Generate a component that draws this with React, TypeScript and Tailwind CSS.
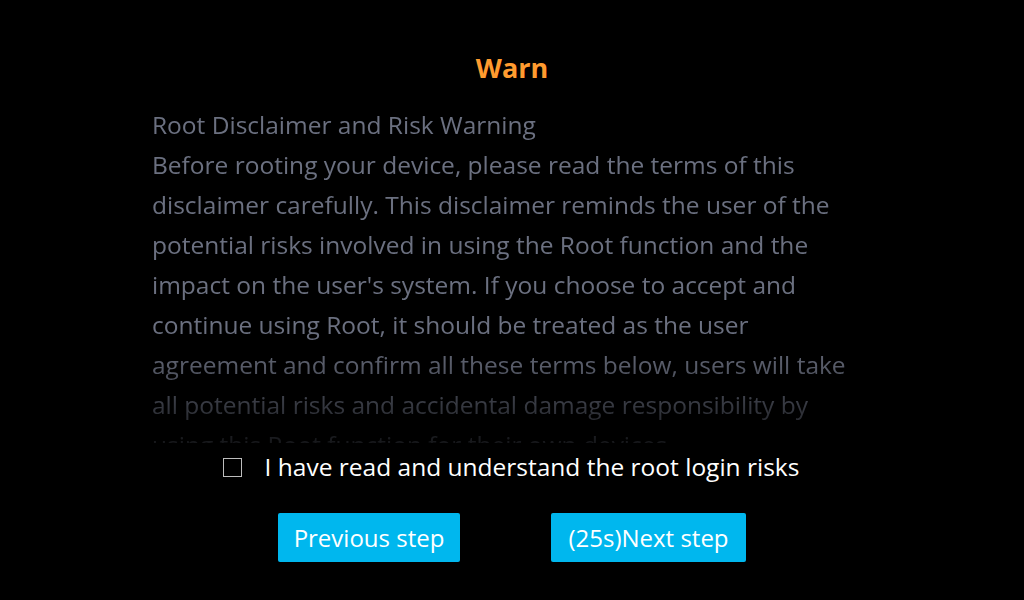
import React from "react";

const lines = [
  "Root Disclaimer and Risk Warning",
  "Before rooting your device, please read the terms of this",
  "disclaimer carefully. This disclaimer reminds the user of the",
  "potential risks involved in using the Root function and the",
  "impact on the user's system. If you choose to accept and",
  "continue using Root, it should be treated as the user",
  "agreement and confirm all these terms below, users will take",
  "all potential risks and accidental damage responsibility by",
  "using this Root function for their own devices.",
];

const mask =
  "linear-gradient(to bottom, #000 0px, #000 225px, rgba(0,0,0,0.8) 262px, rgba(0,0,0,0.5) 300px, rgba(0,0,0,0.2) 338px)";

export default function App() {
  return (
    <div
      className="w-[1024px] h-[600px] bg-black flex flex-col items-center overflow-hidden"
      style={{ fontFamily: '"Open Sans", "Noto Sans", sans-serif' }}
    >
      <div className="mt-[49px] h-[36px] flex items-center text-[27px] font-bold text-[#ff9b2f] leading-none">
        Warn
      </div>
      <div
        className="mt-[20px] w-[720px] h-[338px] overflow-hidden text-[24.5px] leading-[40px] text-[#6b7080]"
        style={{ maskImage: mask, WebkitMaskImage: mask }}
      >
        {lines.map((l, i) => (
          <div key={i} className="whitespace-nowrap">
            {l}
          </div>
        ))}
      </div>
      <label className="mt-[8px] h-[32px] flex items-center gap-[23px] text-white text-[24.5px] leading-[32px] -translate-x-[1px]">
        <span className="w-[19px] h-[19px] border border-[#bdbdbd] bg-black" />
        <span>I have read and understand the root login risks</span>
      </label>
      <div className="mt-[30px] flex gap-[91px]">
        <button className="w-[182px] h-[49px] bg-[#00b7ee] text-white text-[24px] rounded-[2px] whitespace-nowrap">
          Previous step
        </button>
        <button className="w-[195px] h-[49px] bg-[#00b7ee] text-white text-[24px] rounded-[2px] whitespace-nowrap">
          (25s)Next step
        </button>
      </div>
    </div>
  );
}
